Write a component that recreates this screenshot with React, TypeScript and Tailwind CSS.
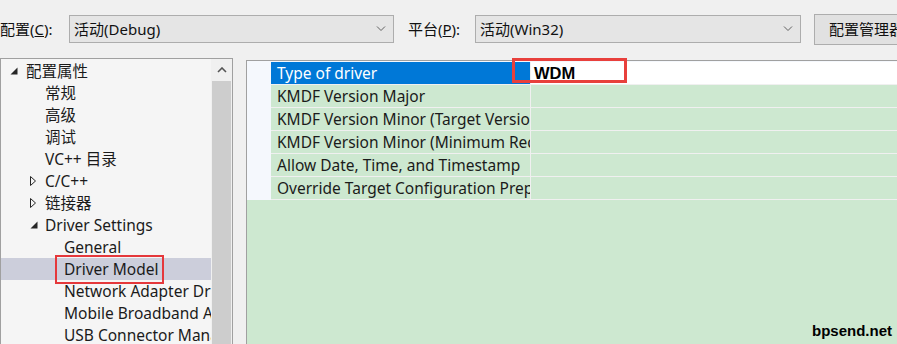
import React from "react";

const FONT = { fontFamily: '"Noto Sans", "Noto Sans CJK SC", sans-serif' };

function Chevron() {
  return (
    <svg width="10" height="6" viewBox="0 0 10 6" className="shrink-0">
      <path d="M1 0.5 L5 4.5 L9 0.5" fill="none" stroke="#606060" strokeWidth="1" />
    </svg>
  );
}

function Dropdown({ text, width }: { text: string; width: string }) {
  return (
    <div className={`${width} shrink-0 h-[28px] flex items-center justify-between pl-[4px] pr-[7px] bg-[#e5e5e5] border border-[#adadad]`}>
      <span className="text-[15px] text-[#111]">{text}</span>
      <Chevron />
    </div>
  );
}

function Expanded() {
  return (
    <svg width="8" height="8" viewBox="0 0 8 8" className="shrink-0">
      <path d="M7.5 0.5 L7.5 7.5 L0.5 7.5 Z" fill="#262626" />
    </svg>
  );
}

function Collapsed() {
  return (
    <svg width="6" height="10" viewBox="0 0 6 10" className="shrink-0">
      <path d="M0.5 0.5 L5.5 5 L0.5 9.5 Z" fill="none" stroke="#262626" strokeWidth="1" />
    </svg>
  );
}

type Node = { label: string; indent: number; icon?: "open" | "closed"; selected?: boolean };

const tree: Node[] = [
  { label: "配置属性", indent: 0, icon: "open" },
  { label: "常规", indent: 1 },
  { label: "高级", indent: 1 },
  { label: "调试", indent: 1 },
  { label: "VC++ 目录", indent: 1 },
  { label: "C/C++", indent: 1, icon: "closed" },
  { label: "链接器", indent: 1, icon: "closed" },
  { label: "Driver Settings", indent: 1, icon: "open" },
  { label: "General", indent: 2 },
  { label: "Driver Model", indent: 2, selected: true },
  { label: "Network Adapter Driver", indent: 2 },
  { label: "Mobile Broadband Adapter", indent: 2 },
  { label: "USB Connector Manager", indent: 2 },
];

const pads = ["pl-[25px]", "pl-[44px]", "pl-[63px]"];
const iconPos = ["left-[9px]", "left-[29px]", "left-[48px]"];

function TreeRow({ n }: { n: Node }) {
  return (
    <div className={`relative h-[22px] flex items-center whitespace-nowrap ${pads[n.indent]} ${n.selected ? "bg-[#cccedb]" : ""}`}>
      {n.icon && (
        <span className={`absolute ${iconPos[n.indent]} top-0 h-full flex items-center`}>
          {n.icon === "open" ? <Expanded /> : <Collapsed />}
        </span>
      )}
      <span className="relative mt-[2px] text-[15.5px] text-[#1b1b1b] leading-none">
        {n.label}
        {n.selected && (
          <span className="absolute left-[-9px] right-[-6px] top-[-7px] bottom-[-6px] border-2 border-[#e5383b]" />
        )}
      </span>
    </div>
  );
}

const props = [
  "Type of driver",
  "KMDF Version Major",
  "KMDF Version Minor (Target Version)",
  "KMDF Version Minor (Minimum Required)",
  "Allow Date, Time, and Timestamp",
  "Override Target Configuration Preprocessor",
];

export default function App() {
  return (
    <div className="relative w-[897px] h-[344px] overflow-hidden bg-[#f0f0f0]" style={FONT}>
      {/* top bar */}
      <div className="h-[58px] flex items-center text-[15px] text-[#111] whitespace-nowrap">
        <span className="w-[69px] shrink-0">
          配置(<span className="underline">C</span>):
        </span>
        <Dropdown text="活动(Debug)" width="w-[325px]" />
        <span className="ml-[14px] w-[67px] shrink-0">
          平台(<span className="underline">P</span>):
        </span>
        <Dropdown text="活动(Win32)" width="w-[326px]" />
        <div className="ml-[13px] shrink-0 h-[31px] w-[120px] flex items-center pl-[14px] bg-[#e1e1e1] border border-[#adadad]">
          配置管理器(O)...
        </div>
      </div>

      <div className="flex items-start h-[286px]">
        {/* tree */}
        <div className="w-[233px] shrink-0 h-[300px] flex border border-[#a0a0a0] bg-[#f5f5f5]">
          <div className="flex-1 pt-[1px] overflow-hidden">
            {tree.map((n) => (
              <TreeRow key={n.label} n={n} />
            ))}
          </div>
          <div className="w-[21px] flex flex-col bg-[#f0f0f0]">
            <div className="h-[22px] flex items-center justify-center">
              <svg width="10" height="6" viewBox="0 0 10 6">
                <path d="M1 5 L5 1 L9 5" fill="none" stroke="#555" strokeWidth="1.6" />
              </svg>
            </div>
            <div className="flex-1 mx-[1px] bg-[#cdcdcd]" />
          </div>
        </div>

        {/* property grid */}
        <div className="relative ml-[13px] mt-[2px] flex-1 h-[300px] flex flex-col border-l border-t border-[#a0a0a0]">
          <div className="flex bg-[#f5f8fd] pt-[1px]">
            <div className="w-[24px]" />
            <div className="flex-1">
              {props.map((p, i) => (
                <div key={p} className="flex h-[23px] border-b border-[#f0f0f0]">
                  <div
                    className={`w-[260px] pl-[6px] pt-[2px] border-r border-[#f0f0f0] flex items-center overflow-hidden whitespace-nowrap text-[15.5px] ${
                      i === 0 ? "bg-[#0078d7] text-white" : "bg-[#cde8d0] text-[#1b1b1b]"
                    }`}
                  >
                    {p}
                  </div>
                  <div className={`flex-1 flex items-center pl-[3px] pt-[1px] ${i === 0 ? "bg-white" : "bg-[#cde8d0]"}`}>
                    {i === 0 && (
                      <span className="font-bold text-[16.5px] text-black" style={{ fontFamily: '"Liberation Sans", Arial, sans-serif' }}>
                        WDM
                      </span>
                    )}
                  </div>
                </div>
              ))}
            </div>
          </div>
          <div className="flex-1 bg-[#cde8d0]" />
          <div className="absolute left-[265px] top-[-3px] w-[115px] h-[25px] border-[3px] border-[#e8403c]" />
        </div>
      </div>

      <div
        className="absolute right-[5px] bottom-[6px] font-bold text-[15px] text-black leading-none"
        style={{ fontFamily: '"Liberation Sans", Arial, sans-serif' }}
      >
        bpsend.net
      </div>
    </div>
  );
}
